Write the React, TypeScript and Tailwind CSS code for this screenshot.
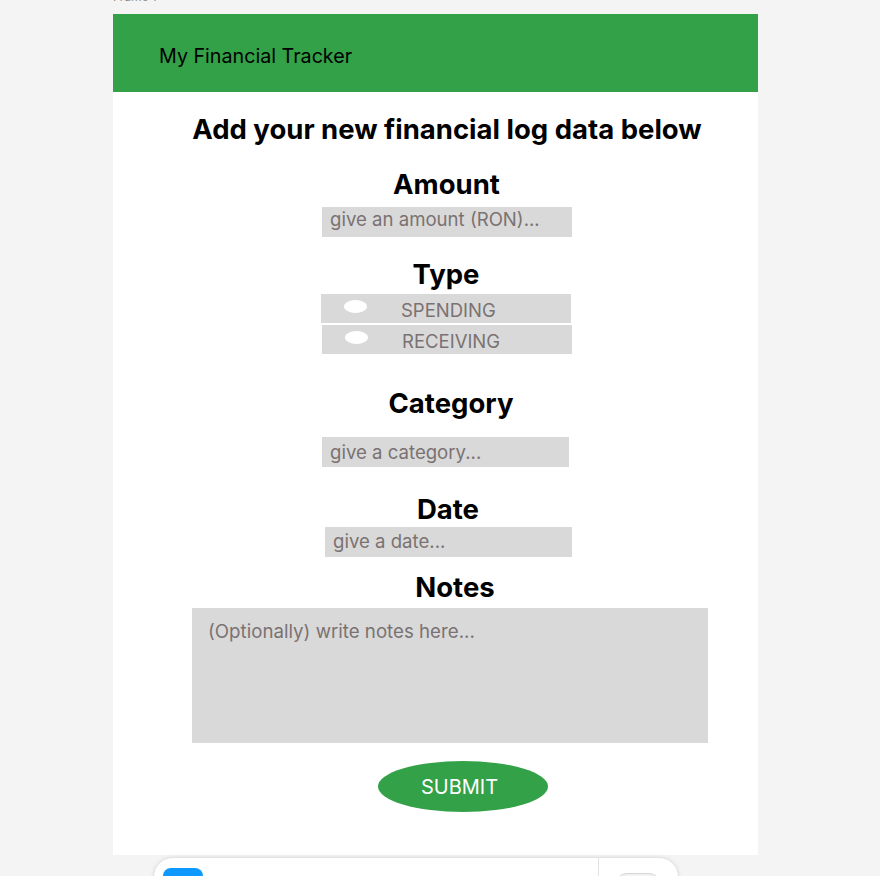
import React from 'react';

const font = { fontFamily: 'Inter, "Noto Sans", sans-serif' };

const Heading: React.FC<{ children: React.ReactNode; className?: string }> = ({ children, className = '' }) => (
  <h2 className={`text-[27.5px] leading-[34px] font-bold text-black ${className}`}>{children}</h2>
);

const TextField: React.FC<{ placeholder: string; className?: string }> = ({ placeholder, className = '' }) => (
  <input
    type="text"
    placeholder={placeholder}
    className={`h-[30px] bg-[#d9d9d9] px-[8px] text-[18.6px] text-black outline-none placeholder:text-[#7a7272] ${className}`}
  />
);

const TypeOption: React.FC<{ label: string; textGap: string; className?: string }> = ({ label, textGap, className = '' }) => (
  <label className={`flex h-[29px] w-[250px] items-center bg-[#d9d9d9] ${className}`}>
    <span className="mb-[4px] ml-[23px] h-[13px] w-[23px] rounded-[50%] bg-white" />
    <span className={`${textGap} pt-[4px] text-[18.5px] text-[#7a7272]`}>{label}</span>
  </label>
);

export default function App() {
  return (
    <div className="relative min-h-screen w-[880px] bg-[#f4f4f4]" style={font}>
      {/* frame label, cut by the top of the viewport */}
      <div className="h-[14px] overflow-hidden pl-[113px]">
        <div className="-mt-[10px] text-[12px] leading-[14px] text-[#8c8c8c]">Frame 1</div>
      </div>

      {/* frame */}
      <div className="ml-[113px] h-[841px] w-[645px] bg-white">
        <header className="flex h-[78px] items-center bg-[#33a147] pl-[46px] pt-[7px]">
          <span className="text-[19.7px] text-black">My Financial Tracker</span>
        </header>

        <form className="flex flex-col items-center pl-[23px]" onSubmit={(e) => e.preventDefault()}>
          <h1 className="mt-[20px] text-[27.5px] leading-[34px] font-bold text-black">
            Add your new financial log data below
          </h1>

          <Heading className="mt-[21px] -ml-[1px]">Amount</Heading>
          <TextField placeholder="give an amount (RON)..." className="mt-[6px] w-[250px] pb-[6px]" />

          <Heading className="mt-[20px] -ml-[2px]">Type</Heading>
          <div className="mt-[3px] flex flex-col gap-[2px]">
            <TypeOption label="SPENDING" textGap="ml-[34px]" className="-ml-px" />
            <TypeOption label="RECEIVING" textGap="ml-[34px]" />
          </div>

          <Heading className="mt-[32px] ml-[8px]">Category</Heading>
          <TextField placeholder="give a category..." className="mt-[17px] w-[247px] -ml-[3px] pb-[1px]" />

          <Heading className="mt-[25px] ml-[2px]">Date</Heading>
          <TextField placeholder="give a date..." className="mt-[1px] w-[247px] ml-[3px] pb-[3px]" />

          <Heading className="mt-[13px] ml-[16px]">Notes</Heading>
          <textarea
            placeholder="(Optionally) write notes here..."
            className="mt-[4px] ml-[6px] h-[135px] w-[516px] resize-none bg-[#d9d9d9] px-[16px] py-[10px] text-[18.7px] text-black outline-none placeholder:text-[#7a7272]"
          />

          <button
            type="submit"
            className="mt-[18px] ml-[32px] h-[51px] w-[170px] rounded-[50%] bg-[#33a147] pr-[7px] text-[20px] text-white"
          >
            SUBMIT
          </button>
        </form>
      </div>

      {/* bottom toolbar overlay */}
      <div className="absolute left-[153px] top-[857px] flex h-[40px] w-[526px] rounded-t-[20px] border border-[#e2e2e2] bg-white shadow-[0_0_4px_rgba(0,0,0,0.08)]">
        <div className="flex flex-1 pl-[9px] pt-[10px]">
          <div className="h-[32px] w-[40px] rounded-[8px] bg-[#0d99ff]" />
        </div>
        <div className="w-[80px] border-l border-[#e2e2e2] pl-[16px] pt-[15px]">
          <div className="h-[24px] w-[46px] rounded-full border border-[#d6d6d6] bg-[#f2f2f2]" />
        </div>
      </div>
    </div>
  );
}
